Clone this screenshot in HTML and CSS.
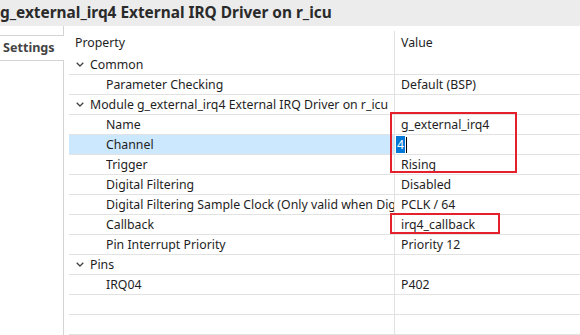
FILE: index.html
```html
<!DOCTYPE html>
<html>
<head>
<meta charset="utf-8">
<link rel="stylesheet" href="styles.css">
</head>
<body>
<div class="title">g_external_irq4 External IRQ Driver on r_icu</div>
<div class="main">
  <div class="tabs">
    <div class="tab-gap"></div>
    <div class="tab">Settings</div>
    <div class="tab-rest"></div>
  </div>
  <div class="table">
    <div class="head">
      <div class="hcell prop">Property</div>
      <div class="hcell val">Value</div>
    </div>
    <div class="row">
      <div class="cell prop group"><svg class="chev" viewBox="0 0 8 5"><path d="M0.7 0.7 L4 4 L7.3 0.7" /></svg><span class="txt">Common</span></div>
      <div class="cell val"></div>
    </div>
    <div class="row">
      <div class="cell prop child"><span class="txt">Parameter Checking</span></div>
      <div class="cell val">Default (BSP)</div>
    </div>
    <div class="row">
      <div class="cell prop group"><svg class="chev" viewBox="0 0 8 5"><path d="M0.7 0.7 L4 4 L7.3 0.7" /></svg><span class="txt">Module g_external_irq4 External IRQ Driver on r_icu</span></div>
      <div class="cell val"></div>
    </div>
    <div class="row">
      <div class="cell prop child"><span class="txt">Name</span></div>
      <div class="cell val">g_external_irq4</div>
    </div>
    <div class="row">
      <div class="cell prop child selected"><span class="txt">Channel</span></div>
      <div class="cell val"><span class="sel">4</span><span class="caret"></span></div>
    </div>
    <div class="row">
      <div class="cell prop child"><span class="txt">Trigger</span></div>
      <div class="cell val">Rising</div>
    </div>
    <div class="row">
      <div class="cell prop child"><span class="txt">Digital Filtering</span></div>
      <div class="cell val">Disabled</div>
    </div>
    <div class="row">
      <div class="cell prop child"><span class="txt">Digital Filtering Sample Clock (Only valid when Digital Filtering is Enabled)</span></div>
      <div class="cell val">PCLK / 64</div>
    </div>
    <div class="row">
      <div class="cell prop child"><span class="txt">Callback</span></div>
      <div class="cell val">irq4_callback</div>
    </div>
    <div class="row">
      <div class="cell prop child"><span class="txt">Pin Interrupt Priority</span></div>
      <div class="cell val">Priority 12</div>
    </div>
    <div class="row">
      <div class="cell prop group"><svg class="chev" viewBox="0 0 8 5"><path d="M0.7 0.7 L4 4 L7.3 0.7" /></svg><span class="txt">Pins</span></div>
      <div class="cell val"></div>
    </div>
    <div class="row">
      <div class="cell prop child"><span class="txt">IRQ04</span></div>
      <div class="cell val">P402</div>
    </div>
    <div class="row">
      <div class="cell prop"></div>
      <div class="cell val"></div>
    </div>
    <div class="row">
      <div class="cell prop"></div>
      <div class="cell val"></div>
    </div>
  </div>
</div>
<div class="mark mark-a"></div>
<div class="mark mark-b"></div>
</body>
</html>
```

FILE: styles.css
```css
html, body {
  margin: 0;
  padding: 0;
  background: #ffffff;
  width: 580px;
  height: 335px;
  overflow: hidden;
  font-family: "Noto Sans", "Open Sans", sans-serif;
  font-size: 12.3px;
  color: #1e1e1e;
  position: relative;
}

.title {
  height: 26px;
  line-height: 25px;
  background: #ececec;
  font-size: 15.4px;
  font-weight: 700;
  color: #2a2a2a;
  white-space: nowrap;
}

.main {
  display: flex;
  height: 309px;
}

.tabs {
  width: 64px;
  display: flex;
  flex-direction: column;
  flex: none;
}

.tab-gap {
  height: 9px;
  border-right: 1px solid #d4d4d4;
}

.tab {
  height: 24px;
  line-height: 24px;
  border-top: 1px solid #d4d4d4;
  border-bottom: 1px solid #d4d4d4;
  font-weight: 700;
  font-size: 12.6px;
  color: #444;
  padding-left: 3px;
  white-space: nowrap;
}

.tab-rest {
  flex: 1;
  border-right: 1px solid #d4d4d4;
}

.table {
  margin-left: 5px;
  flex: 1;
  display: flex;
  flex-direction: column;
}

.head {
  display: grid;
  grid-template-columns: 325px 1fr;
  margin-top: 5px;
  height: 24px;
}

.hcell {
  line-height: 24px;
  white-space: nowrap;
}

.hcell.prop {
  padding-left: 6px;
}

.hcell.val {
  border-left: 1px solid #e2e2e2;
  padding-left: 6px;
}

.row {
  display: grid;
  grid-template-columns: 325px 1fr;
  height: 20px;
  border-bottom: 1px solid #e2e2e2;
  box-sizing: border-box;
}

.cell {
  line-height: 19px;
  white-space: nowrap;
  overflow: hidden;
  display: flex;
  align-items: center;
  min-width: 0;
}

.txt {
  white-space: nowrap;
  overflow: hidden;
  min-width: 0;
}

.cell.val {
  border-left: 1px solid #e2e2e2;
  padding-left: 6px;
}

.cell.group {
  padding-left: 7px;
}

.cell.child {
  padding-left: 37px;
}

.cell.selected {
  background: #cce8ff;
}

.chev {
  flex: none;
  width: 8px;
  height: 5px;
  margin-right: 6px;
  fill: none;
  stroke: #444;
  stroke-width: 1.3;
}

.sel {
  background: #0078d7;
  color: #fff;
  padding: 0 1px;
  margin-left: -5px;
  line-height: 17px;
}

.caret {
  display: inline-block;
  width: 1px;
  height: 16px;
  background: #000;
  margin-left: 1px;
}

.mark {
  position: absolute;
  border: 2px solid #e3202b;
  box-sizing: border-box;
}

.mark-a {
  left: 390px;
  top: 112px;
  width: 127px;
  height: 61px;
}

.mark-b {
  left: 390px;
  top: 213px;
  width: 110px;
  height: 21px;
}
```
